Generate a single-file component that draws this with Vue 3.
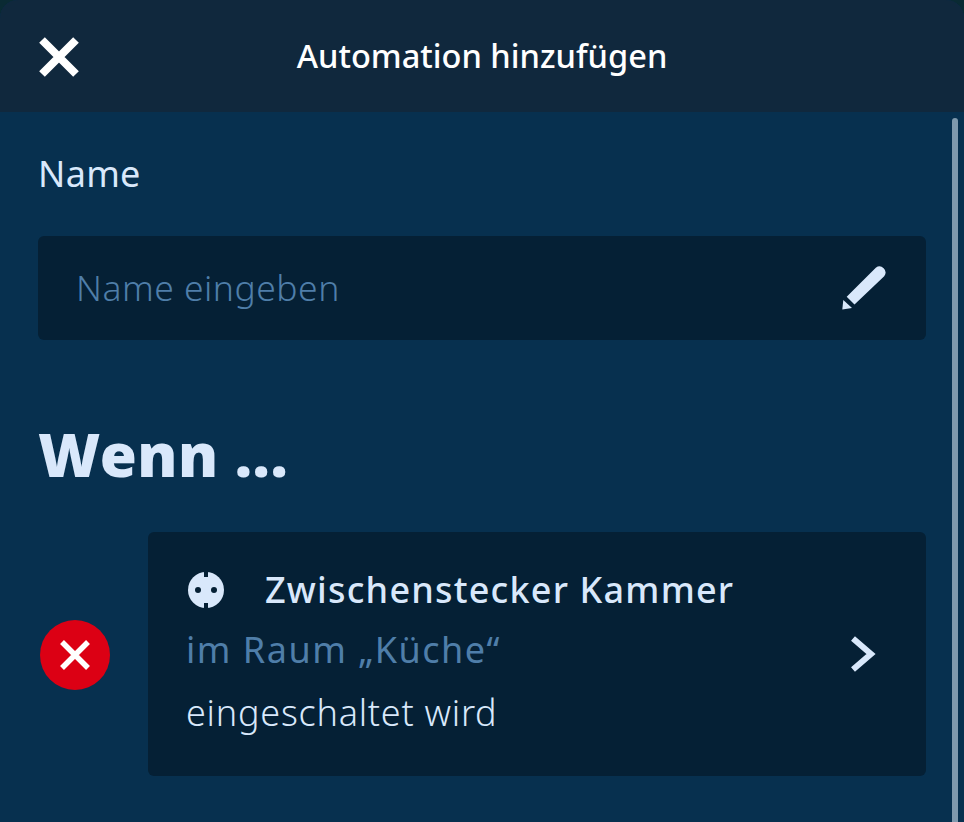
<script setup>
const title = 'Automation hinzufügen'
</script>

<template>
  <div class="screen">
    <header class="topbar">
      <button class="close" aria-label="Schließen">
        <svg width="40" height="40" viewBox="0 0 40 40">
          <path d="M3 3 L37 37 M37 3 L3 37" stroke="#fff" stroke-width="8" fill="none" />
        </svg>
      </button>
      <h1>{{ title }}</h1>
    </header>

    <main class="content">
      <div class="scrollbar"></div>

      <label class="field-label">Name</label>
      <div class="input">
        <span class="placeholder">Name eingeben</span>
        <svg class="pencil" width="44" height="44" viewBox="0 0 44 44">
          <path d="M4.7 30.7 L33.8 1.8 A6 6 0 0 1 42.2 10.2 L12.5 38.5 Z" fill="#d9e8fb" />
          <path d="M0.3 43.6 L1.3 34 L10 42 Z" fill="#d9e8fb" />
        </svg>
      </div>

      <h2>Wenn ...</h2>

      <div class="rule">
        <button class="remove" aria-label="Entfernen">
          <svg width="32" height="32" viewBox="0 0 32 32">
            <path d="M3 3 L29 29 M29 3 L3 29" stroke="#fff" stroke-width="5.5" fill="none" />
          </svg>
        </button>
        <div class="card">
          <div class="card-text">
            <div class="device">
              <svg class="plug" width="36" height="36" viewBox="0 0 36 36">
                <circle cx="18" cy="18" r="18" fill="#d9e8fb" />
                <rect x="16" y="0" width="4" height="5" fill="#052035" />
                <rect x="16" y="31" width="4" height="5" fill="#052035" />
                <circle cx="10" cy="18" r="3" fill="#052035" />
                <circle cx="26" cy="18" r="3" fill="#052035" />
              </svg>
              <span>Zwischenstecker Kammer</span>
            </div>
            <div class="room">im Raum „Küche“</div>
            <div class="state">eingeschaltet wird</div>
          </div>
          <svg class="chevron" width="26" height="36" viewBox="0 0 26 36">
            <path d="M3 2.5 L21 18 L3 33.5" stroke="#d9e8fb" stroke-width="6" fill="none" />
          </svg>
        </div>
      </div>
    </main>
  </div>
</template>

<style scoped>
.screen {
  width: 964px;
  height: 822px;
  overflow: hidden;
  display: flex;
  flex-direction: column;
  font-family: "Noto Sans", "Open Sans", sans-serif;
  color: #d9e8fb;
  background: #07304f;
  border-radius: 18px 18px 0 0;
}

.topbar {
  height: 112px;
  flex: none;
  background: #10283d;
  display: flex;
  align-items: center;
  justify-content: center;
  position: relative;
}

.topbar h1 {
  margin: 0 0 2px;
  font-size: 32.6px;
  font-weight: 500;
  color: #fff;
}

.close {
  position: absolute;
  left: 39px;
  top: 37px;
  padding: 0;
  border: none;
  background: none;
  line-height: 0;
}

.content {
  flex: 1;
  position: relative;
  padding: 40px 38px 0;
}

.scrollbar {
  position: absolute;
  left: 952px;
  top: 6px;
  bottom: 0;
  width: 6px;
  border-radius: 3px 3px 0 0;
  background: #7f99ad;
}

.field-label {
  display: block;
  font-size: 36px;
  line-height: 44px;
  font-weight: 400;
  letter-spacing: 0.3px;
}

.input {
  margin-top: 40px;
  height: 104px;
  box-sizing: border-box;
  width: 888px;
  padding: 0 40px 0 38px;
  background: #052035;
  border-radius: 6px;
  display: flex;
  align-items: center;
  justify-content: space-between;
}

.placeholder {
  margin-bottom: 2px;
  font-size: 35.5px;
  font-weight: 300;
  letter-spacing: 0.5px;
  color: #4f7ea9;
}

h2 {
  margin: 78px 0 0;
  font-size: 60px;
  line-height: 72px;
  font-weight: 900;
  letter-spacing: 0.5px;
}

.rule {
  margin-top: 42px;
  display: flex;
  align-items: center;
  gap: 38px;
  padding-left: 2px;
}

.remove {
  width: 70px;
  height: 70px;
  margin-top: 2px;
  flex: none;
  padding: 0;
  border: none;
  border-radius: 50%;
  background: #dc0014;
  display: flex;
  align-items: center;
  justify-content: center;
}

.card {
  flex: none;
  width: 778px;
  height: 244px;
  box-sizing: border-box;
  padding: 0 50px 0 38px;
  background: #052035;
  border-radius: 6px;
  display: flex;
  align-items: center;
  justify-content: space-between;
}

.card-text {
  margin-bottom: 3px;
}

.device {
  display: flex;
  align-items: center;
  gap: 41px;
  font-size: 36px;
  line-height: 60px;
  font-weight: 500;
  letter-spacing: 1.2px;
}

.plug {
  margin-left: 2px;
}

.room {
  font-size: 36px;
  line-height: 60px;
  color: #4f7ea9;
  letter-spacing: 1.5px;
}

.state {
  font-size: 36px;
  font-weight: 300;
  line-height: 66px;
  letter-spacing: 0.75px;
}
</style>

<style>
body {
  background: #0a2a33;
}
</style>
